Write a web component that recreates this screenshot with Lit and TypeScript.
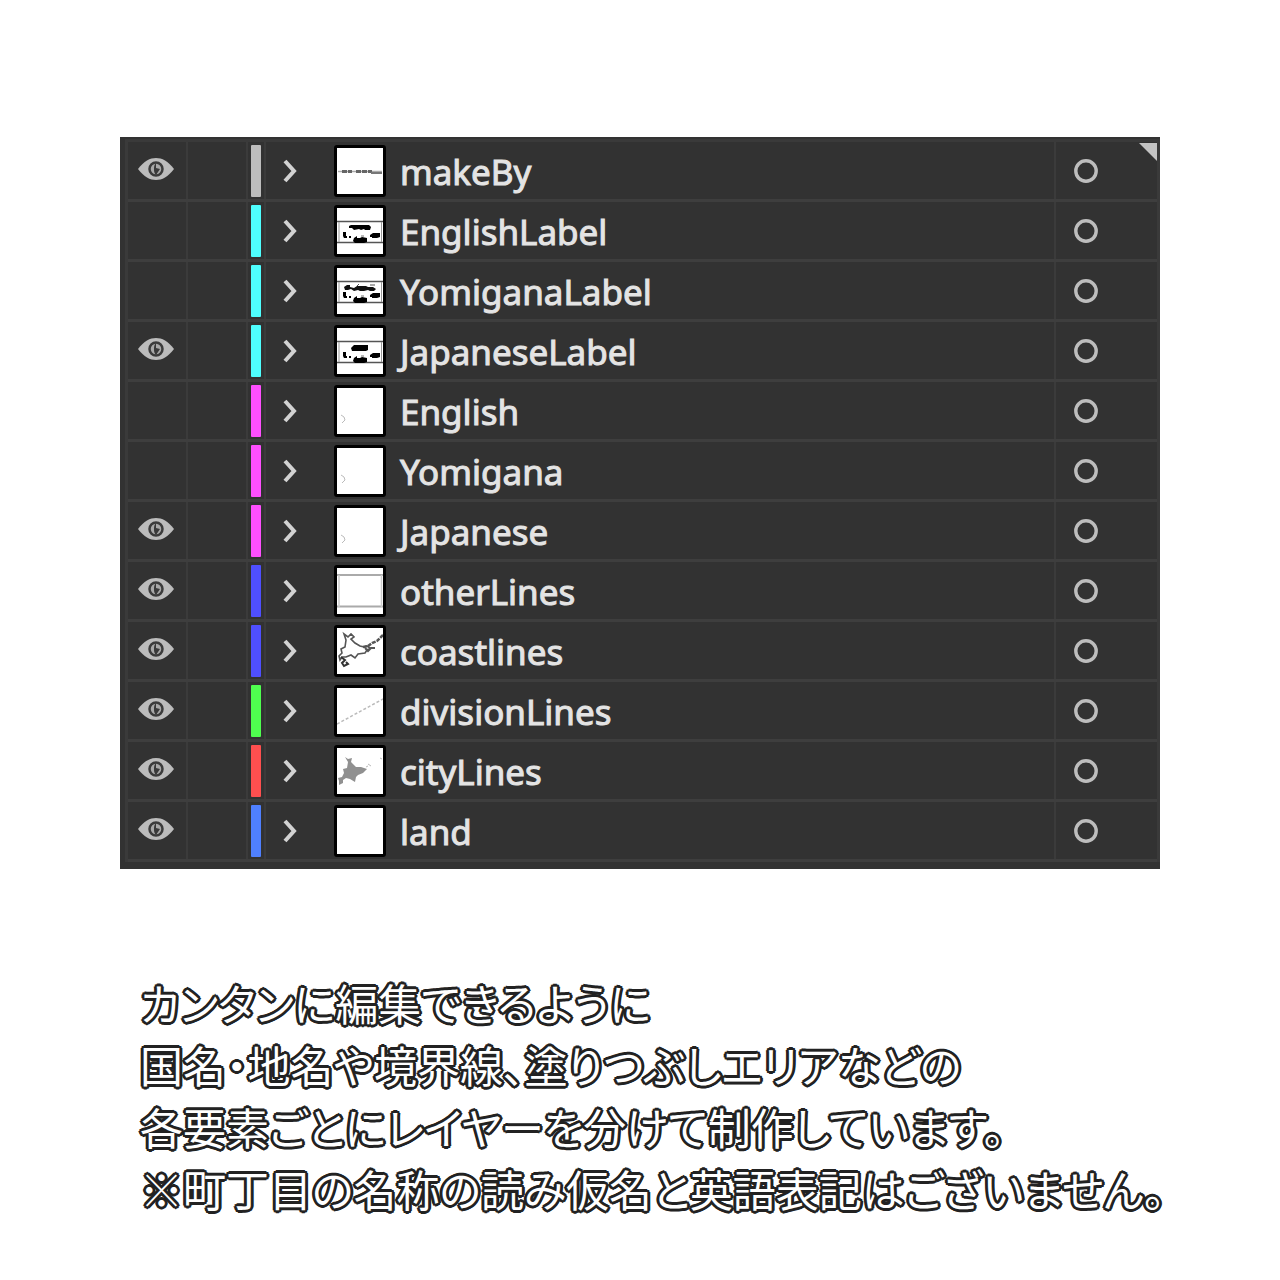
import { LitElement, html, svg, css, TemplateResult } from "lit";
import { customElement, property, state } from "lit/decorators.js";

type Thumb = "credit" | "english" | "yomigana" | "japanese" | "names" | "frame" | "coast" | "division" | "city" | "blank";

interface Layer {
  name: string;
  color: string;
  visible: boolean;
  thumb: Thumb;
}

const LAYERS: Layer[] = [
  { name: "makeBy", color: "#bdbdbd", visible: true, thumb: "credit" },
  { name: "EnglishLabel", color: "#4fffff", visible: false, thumb: "english" },
  { name: "YomiganaLabel", color: "#4fffff", visible: false, thumb: "yomigana" },
  { name: "JapaneseLabel", color: "#4fffff", visible: true, thumb: "japanese" },
  { name: "English", color: "#ff4fff", visible: false, thumb: "names" },
  { name: "Yomigana", color: "#ff4fff", visible: false, thumb: "names" },
  { name: "Japanese", color: "#ff4fff", visible: true, thumb: "names" },
  { name: "otherLines", color: "#4f4fff", visible: true, thumb: "frame" },
  { name: "coastlines", color: "#4f4fff", visible: true, thumb: "coast" },
  { name: "divisionLines", color: "#4fff4f", visible: true, thumb: "division" },
  { name: "cityLines", color: "#ff4f4f", visible: true, thumb: "city" },
  { name: "land", color: "#4f80ff", visible: true, thumb: "blank" },
];

const labelFrame = svg`
  <path d="M0 13.500H46M0 34.500H46" stroke="#555" stroke-width="1.500"/>
  <path d="M2 14V34M44.500 14V34" stroke="#999" stroke-width="1"/>
  <path d="M6 24h3v4h1v2H7l-1-2zM12 28h2v2h-2zM17 30l3-2v2h3l2-1 5 1v4l-3 1H18l-2-2zM33 27l3-2h7v4l-3 1h-5v-1h-2z" fill="#000"/>
  <path d="M24 28h3" stroke="#777"/>`;

const THUMBS: Record<Thumb, TemplateResult> = {
  credit: svg`
    <path d="M1 23.500H45" stroke="#aaa" stroke-width="1.500"/>
    <path d="M5 23.500h10M19 23.500h16" stroke="#666" stroke-width="3" stroke-dasharray="5 1"/>
    <path d="M34 25h11" stroke="#777" stroke-width="2"/>`,
  english: svg`${labelFrame}<path d="M12 18l2-1h18l2 2-1 3h-5l-1-1-3 1-2-1-5 1-2-2h-3z" fill="#000"/>`,
  yomigana: svg`${labelFrame}<path d="M7 19l3-2h3v2l4 1 3-2h9l2 1h5l3 2-2 2h-4l-2-1-4 1h-4l-2-1-4 1-3-2-3 1h-3z" fill="#111"/>
    <path d="M33 17h5M20 18l2-2" stroke="#555"/>`,
  japanese: svg`${labelFrame}<path d="M14 20l3-3h14v5l-2 1H15z" fill="#000"/>`,
  names: svg`<path d="M4 27l3 2M5 35l3-3-1-3" stroke="#bbb" fill="none"/>`,
  frame: svg`<path d="M0 7H46M0 38.500H46" stroke="#aaa" stroke-width="2"/>
    <path d="M2 7V39M44.500 7V39" stroke="#ccc" stroke-width="1.500"/>`,
  coast: svg`
    <path d="M9 12l-2-6 4 3 3-3 3 3-3 2 4 4 5 3 4 1 3-1 3 2-3 2-2 3-7 1-3 4-4-3-5 2-4 0-2 3-1-4 3-3-1-4 4-2z" fill="none" stroke="#555" stroke-width="1.600"/>
    <path d="M26 19l5-1 4-3 5-2 4-4 3-3" fill="none" stroke="#555" stroke-width="2.500" stroke-dasharray="4 1"/>
    <path d="M28 20l3 3 3-3 4 0" fill="none" stroke="#555" stroke-width="2"/>
    <path d="M4 29l4 3-3 3 2 3 4-2-2-2" fill="none" stroke="#333" stroke-width="2"/>`,
  division: svg`<path d="M0 36L46 11" stroke="#bbb" stroke-width="1.500" stroke-dasharray="3 2"/>`,
  city: svg`
    <path d="M8 9l3 2 4-1-1 4 5 5 5 0 6 2-4 4-5 2-2 2-1 5-5-3-4-1-3 2 0 3-4 2 0-4-1-3 4-1 2-4-1-4 4-1 1-6z" fill="#909090"/>
    <path d="M29 19l2-1M31 16l3 2M43 10l2 1" stroke="#bbb"/>`,
  blank: svg``,
};

@customElement("layer-row")
export class LayerRow extends LitElement {
  @property({ attribute: false }) layer!: Layer;
  @state() private toggled = false;

  static styles = css`
    :host {
      display: grid;
      grid-template-columns: 60px 60px 18px 48px 86px minmax(0, 1fr) 101px;
      height: 60px;
      box-sizing: border-box;
      border-bottom: 3px solid #3e3e3e;
    }
    .cell {
      display: flex;
      align-items: center;
      box-sizing: border-box;
      min-width: 0;
    }
    .ruled {
      border-right: 2px solid #3b3b3b;
    }
    .centered {
      justify-content: center;
    }
    .button {
      display: flex;
      padding: 0;
      border: 0;
      background: none;
      cursor: pointer;
    }
    .visibility {
      padding: 0 2px 4px 0;
    }
    .eye {
      width: 36px;
      height: 24px;
    }
    .bar {
      width: 10px;
      height: 52px;
      border-radius: 1px;
    }
    .preview {
      padding-left: 20px;
    }
    .thumb {
      box-sizing: border-box;
      width: 52px;
      height: 52px;
      border: 3px solid #000;
      border-radius: 3px;
      background: #fff;
    }
    .name {
      padding-top: 2px;
      color: #e4e4e4;
      font: 35px/48px "Noto Sans", sans-serif;
      white-space: nowrap;
      -webkit-text-stroke: 1px #e4e4e4;
    }
    .target {
      padding-left: 18px;
    }
  `;

  render() {
    const { name, color, visible, thumb } = this.layer;
    const shown = visible !== this.toggled;
    return html`
      <div class="cell ruled centered visibility">
        <button class="button eye" aria-label="Visibility of ${name}" aria-pressed=${shown}
          @click=${() => (this.toggled = !this.toggled)}>
          ${shown
            ? html`<svg width="36" height="24" viewBox="0 0 36 24" aria-hidden="true">
                <path d="M0 12C6 4 12 1 18 1s12 3 18 11C30 20 24 23 18 23S6 20 0 12z" fill="#bcbcbc"/>
                <circle cx="18" cy="12" r="6.500" fill="#a8a8a8" stroke="#3c3c3c" stroke-width="2.500"/>
                <path d="M18 6v5l4 1-4 6c-2-2-2-4-2-6s0-4 2-6z" fill="#3a3a3a"/>
              </svg>`
            : ""}
        </button>
      </div>
      <div class="cell ruled"></div>
      <div class="cell ruled centered"><div class="bar" style="background:${color}"></div></div>
      <div class="cell centered">
        <button class="button" aria-label="Expand ${name}">
          <svg width="14" height="24" viewBox="0 0 14 24" aria-hidden="true">
            <path d="M2 2l9 10L2 22" fill="none" stroke="#d2d2d2" stroke-width="4"/>
          </svg>
        </button>
      </div>
      <div class="cell preview">
        <svg class="thumb" viewBox="0 0 46 46" fill="none" aria-hidden="true">${THUMBS[thumb]}</svg>
      </div>
      <div class="cell ruled"><span class="name">${name}</span></div>
      <div class="cell target">
        <button class="button" aria-label="Target ${name}">
          <svg width="24" height="24" viewBox="0 0 24 24" aria-hidden="true">
            <circle cx="12" cy="12" r="10.200" fill="none" stroke="#bdbdbd" stroke-width="3.400"/>
          </svg>
        </button>
      </div>
    `;
  }
}

@customElement("app-root")
export class AppRoot extends LitElement {
  static styles = css`
    :host {
      display: block;
      min-height: 100vh;
      box-sizing: border-box;
      padding: 137px 120px 56px;
      background: #fff;
    }
    .panel {
      position: relative;
      padding: 2px 0 7px 5px;
      background: #323232;
    }
    .list {
      margin: 0;
      padding: 0;
      border: 3px solid #3a3a3a;
      border-bottom: 0;
      list-style: none;
    }
    .corner {
      position: absolute;
      top: 6px;
      right: 3px;
      width: 18px;
      height: 18px;
    }
    .caption {
      margin: 102px 0 0;
      padding-left: 20px;
      color: #fff;
      font: 400 43px/62px "Noto Sans CJK JP", sans-serif;
      font-feature-settings: "palt";
      white-space: nowrap;
      text-shadow:
        3px 0 #222, -3px 0 #222, 0 3px #222, 0 -3px #222,
        2px 2px #222, -2px 2px #222, 2px -2px #222, -2px -2px #222,
        2px 1px #222, -2px 1px #222, 2px -1px #222, -2px -1px #222,
        1px 2px #222, -1px 2px #222, 1px -2px #222, -1px -2px #222;
    }
  `;

  render() {
    return html`
      <section class="panel">
        <ul class="list">
          ${LAYERS.map((layer) => html`<li><layer-row .layer=${layer}></layer-row></li>`)}
        </ul>
        <svg class="corner" viewBox="0 0 18 18" aria-hidden="true"><path d="M0 0H18V18z" fill="#c4c4c4"/></svg>
      </section>
      <p class="caption" lang="ja">
        カンタンに編集できるように<br />国名・地名や境界線、塗りつぶしエリアなどの<br />各要素ごとにレイヤーを分けて制作しています。<br />※町丁目の名称の読み仮名と英語表記はございません。
      </p>
    `;
  }
}
